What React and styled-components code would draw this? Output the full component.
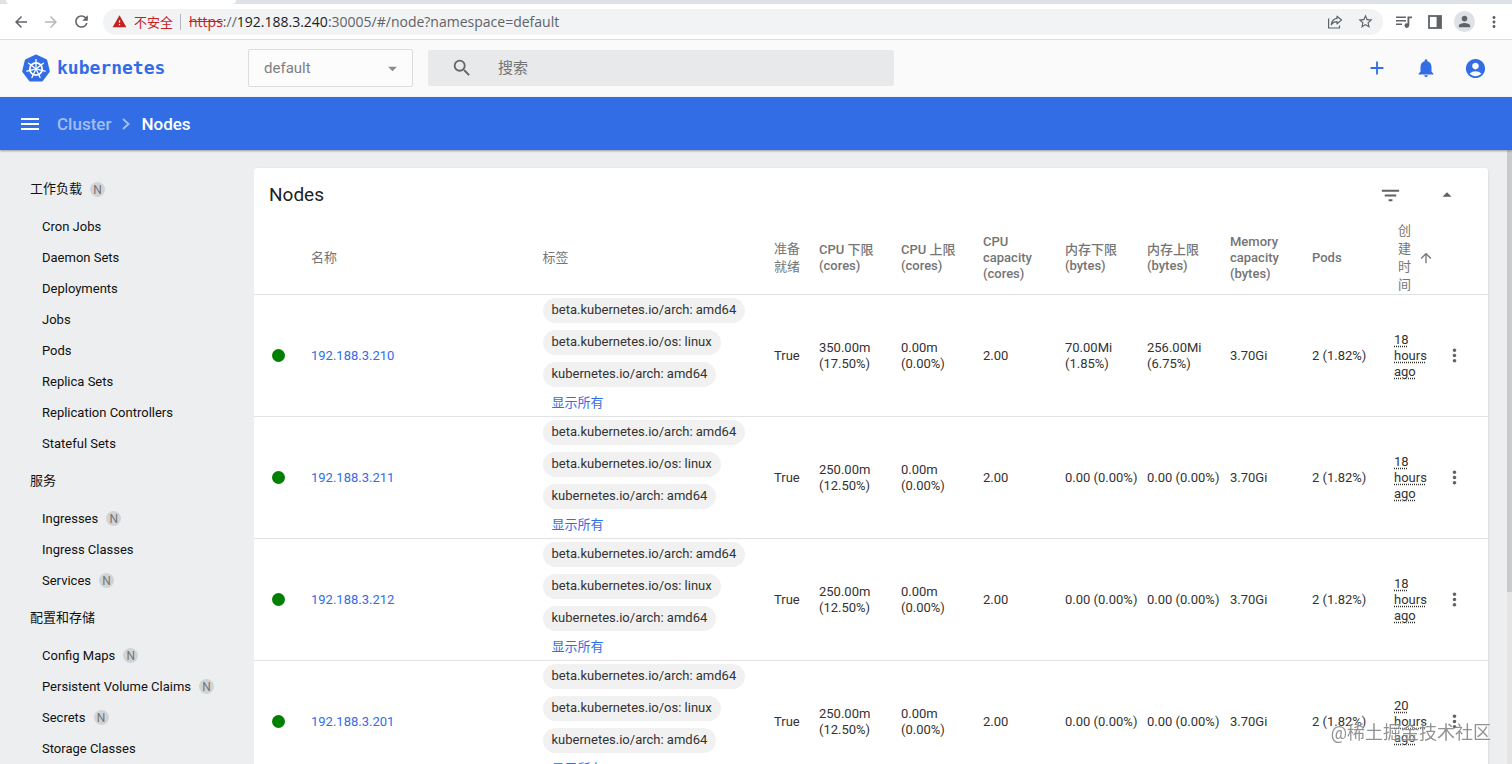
import { createGlobalStyle, styled } from 'styled-components';
import {
  MdAccountCircle,
  MdAdd,
  MdArrowBack,
  MdArrowDropDown,
  MdArrowDropUp,
  MdArrowForward,
  MdArrowUpward,
  MdFilterList,
  MdMenu,
  MdMoreVert,
  MdNotifications,
  MdPerson,
  MdRefresh,
  MdSearch,
  MdStarBorder,
  MdWarning,
} from 'react-icons/md';

const GlobalStyle = createGlobalStyle`
  * {
    box-sizing: border-box;
  }
  body {
    margin: 0;
    background: #eceeef;
    color: #212121;
    font-family: Roboto, 'Noto Sans CJK SC', sans-serif;
    font-size: 13px;
    line-height: 16px;
    overflow: hidden;
  }
  a {
    color: inherit;
    text-decoration: none;
  }
`;

const Page = styled.div`
  display: flex;
  flex-direction: column;
  height: 100vh;
`;

const IconButton = styled.button`
  display: flex;
  align-items: center;
  justify-content: center;
  flex: none;
  width: ${p => p.$size || 24}px;
  height: ${p => p.$size || 24}px;
  padding: 0;
  border: 0;
  border-radius: 50%;
  background: ${p => p.$background || 'transparent'};
  color: ${p => p.$color || '#5f6368'};
`;

/* browser bar */

const TabStrip = styled.div`
  display: flex;
  flex: none;
  height: 4px;
  background: #dee1e6;
`;

const ActiveTab = styled.div`
  width: 230px;
  margin-left: 6px;
  border-radius: 0 0 4px 4px;
  background: #fff;
`;

const BrowserBar = styled.div`
  display: flex;
  align-items: center;
  flex: none;
  gap: 7px;
  height: 36px;
  padding: 0 6px 0 9px;
  border-bottom: 1px solid #dcdfe1;
  background: #fff;
`;

const HistoryButtons = styled.div`
  display: flex;
  gap: 6px;
`;

const AddressBar = styled.div`
  display: flex;
  align-items: center;
  flex: 1;
  height: 26px;
  margin: 0 2px 0 3px;
  padding: 0 6px 0 9px;
  border-radius: 13px;
  background: #f1f3f4;
  color: #5f6368;
  font-family: 'Open Sans', 'Noto Sans CJK SC', sans-serif;
  font-size: 14px;
  gap: 6px;
`;

const NotSecure = styled.span`
  display: flex;
  align-items: center;
  gap: 7px;
  padding-right: 7px;
  border-right: 1px solid #b5b8bb;
  color: #c5221f;
  font-size: 13px;
`;

const Url = styled.span`
  flex: 1;
  padding-left: 2px;
  s {
    color: #c5221f;
  }
  b {
    color: #202124;
    font-weight: 400;
  }
`;

/* dashboard header */

const Header = styled.header`
  display: flex;
  align-items: center;
  flex: none;
  height: 57px;
  padding: 0 25px 1px 22px;
  background: #fafafa;
`;

const Brand = styled.a`
  display: flex;
  align-items: center;
  gap: 7px;
  width: 226px;
  color: #326de6;
  font-family: 'DejaVu Sans Mono', monospace;
  font-size: 18px;
  font-weight: 700;
  line-height: 18px;
`;

const SelectBox = styled.div`
  position: relative;
  width: 165px;
  height: 38px;
  color: #8a8a8a;
  svg {
    position: absolute;
    top: 9px;
    right: 10px;
    pointer-events: none;
  }
`;

const NamespaceSelect = styled.select`
  appearance: none;
  width: 100%;
  height: 100%;
  padding: 0 15px;
  border: 1px solid #dcdcdc;
  border-radius: 2px;
  background: #fcfcfc;
  color: #7f7f7f;
  font-family: inherit;
  font-size: 15px;
`;

const SearchBox = styled.label`
  display: flex;
  align-items: center;
  width: 466px;
  height: 36px;
  margin-left: 15px;
  padding-left: 23px;
  border-radius: 2px;
  background: #e7e9ea;
  color: #666;
`;

const SearchInput = styled.input`
  flex: 1;
  margin-left: 25px;
  padding: 0;
  border: 0;
  outline: 0;
  background: transparent;
  font-family: inherit;
  font-size: 15px;
  &::placeholder {
    color: #757575;
  }
`;

const HeaderActions = styled.div`
  display: flex;
  gap: 25px;
  margin-left: auto;
`;

const ActionBar = styled.div`
  display: flex;
  align-items: center;
  flex: none;
  z-index: 1;
  height: 53px;
  padding: 0 18px;
  background: #326de6;
  box-shadow: 0 1px 2px rgba(0, 0, 0, 0.35);
  color: #fff;
`;

const Breadcrumbs = styled.nav`
  display: flex;
  align-items: center;
  gap: 10px;
  margin-left: 15px;
  font-size: 17px;
  font-weight: 500;
  line-height: 20px;
  a, svg {
    color: #a0beef;
  }
`;

/* side navigation */

const Body = styled.div`
  display: flex;
  flex: 1;
  min-height: 0;
`;

const SideNav = styled.nav`
  flex: none;
  width: 254px;
  padding: 17px 0 0 30px;
  overflow: hidden;
  color: #111;
`;

const NavGroup = styled.a`
  display: flex;
  align-items: center;
  gap: 8px;
  height: 44px;
`;

const NavItem = styled.a`
  display: flex;
  align-items: center;
  gap: 8px;
  height: 31px;
  padding-left: 12px;
`;

const Badge = styled.span`
  width: 15px;
  height: 15px;
  border-radius: 50%;
  background: #d2d3d4;
  color: #757575;
  font-size: 12px;
  line-height: 16px;
  text-align: center;
`;

/* node list */

const Main = styled.main`
  flex: 1;
  padding: 18px 19px 0 0;
  overflow: hidden;
`;

const Card = styled.section`
  border-radius: 3px;
  background: #fff;
  box-shadow: 0 1px 3px rgba(0, 0, 0, 0.14);
`;

const CardHeader = styled.div`
  display: flex;
  align-items: center;
  gap: 33px;
  height: 54px;
  padding: 0 29px 0 15px;
`;

const CardTitle = styled.h2`
  flex: 1;
  margin: 0;
  font-size: 19px;
  font-weight: 400;
`;

const Table = styled.table`
  width: 100%;
  border-collapse: separate;
  border-spacing: 0;
  table-layout: fixed;
  color: #333;
  text-align: left;
`;

const Column = styled.col`
  width: ${p => (p.$width ? `${p.$width}px` : 'auto')};
`;

const HeadCell = styled.th`
  height: 73px;
  padding: 0 ${p => p.$gap || 0}px 0 0;
  border-bottom: 1px solid #e2e2e2;
  color: #757575;
  font-weight: ${p => (p.$cjk ? 400 : 500)};
  line-height: ${p => (p.$cjk ? 18 : 16)}px;
`;

const SortLabel = styled.span`
  display: flex;
  align-items: center;
  gap: 6px;
  padding-left: 4px;
  span {
    width: 14px;
  }
  svg {
    flex: none;
  }
`;

const Cell = styled.td`
  height: 122px;
  padding: 0 ${p => p.$gap || 0}px 0 0;
  border-bottom: 1px solid #e2e2e2;
`;

const StatusDot = styled.div`
  width: 13px;
  height: 13px;
  margin-left: 18px;
  border-radius: 50%;
  background: #008000;
`;

const NodeLink = styled.a`
  color: #326de6;
`;

const Labels = styled.div`
  display: flex;
  flex-direction: column;
  align-items: flex-start;
  gap: 7px;
  padding: 3px 0 5px;
`;

const Chip = styled.span`
  height: 25px;
  padding: 0 9px;
  border-radius: 13px;
  background: #f1f1f1;
  line-height: 24px;
  white-space: nowrap;
`;

const ShowAll = styled.button`
  height: 17px;
  padding: 0 9px;
  border: 0;
  background: transparent;
  color: #326de6;
  font: inherit;
`;

const Age = styled.span`
  text-decoration: underline dotted;
  text-underline-offset: 2px;
`;

const ScrollTrack = styled.div`
  flex: none;
  width: 5px;
  background: #e4e4e5;
`;

const ScrollThumb = styled.div`
  height: 72%;
  background: #c9cacc;
`;

const Watermark = styled.div`
  position: fixed;
  right: 21px;
  bottom: 19px;
  z-index: 2;
  color: rgba(110, 110, 110, 0.75);
  font-size: 18px;
  line-height: 24px;
  text-shadow: 0 0 2px #fff;
  pointer-events: none;
`;

const navigation = [
  {
    title: '工作负载',
    namespaced: true,
    items: [
      ['Cron Jobs'],
      ['Daemon Sets'],
      ['Deployments'],
      ['Jobs'],
      ['Pods'],
      ['Replica Sets'],
      ['Replication Controllers'],
      ['Stateful Sets'],
    ],
  },
  { title: '服务', items: [['Ingresses', true], ['Ingress Classes'], ['Services', true]] },
  {
    title: '配置和存储',
    items: [['Config Maps', true], ['Persistent Volume Claims', true], ['Secrets', true], ['Storage Classes']],
  },
];

const nodes = [
  { name: '192.188.3.210', cpu: '350.00m (17.50%)', memRequest: '70.00Mi (1.85%)', memLimit: '256.00Mi (6.75%)', age: '18 hours ago' },
  { name: '192.188.3.211', cpu: '250.00m (12.50%)', memRequest: '0.00 (0.00%)', memLimit: '0.00 (0.00%)', age: '18 hours ago' },
  { name: '192.188.3.212', cpu: '250.00m (12.50%)', memRequest: '0.00 (0.00%)', memLimit: '0.00 (0.00%)', age: '18 hours ago' },
  { name: '192.188.3.201', cpu: '250.00m (12.50%)', memRequest: '0.00 (0.00%)', memLimit: '0.00 (0.00%)', age: '20 hours ago' },
];

const labels = ['beta.kubernetes.io/arch: amd64', 'beta.kubernetes.io/os: linux', 'kubernetes.io/arch: amd64'];

const columnWidths = [57, 0, 0, 45, 82, 82, 82, 82, 83, 82, 82, 48, 46];

const spokes = [0, 1, 2, 3, 4, 5, 6].map(i => (i * 360) / 7);

const KubernetesLogo = () => (
  <svg width="28" height="29" viewBox="0 0 28 29" aria-hidden="true">
    <path
      d="M14 2.4 L23.5 6.9 L26 17.2 L19.4 25.8 L8.6 25.8 L2 17.2 L4.5 6.9 Z"
      fill="#326de6"
      stroke="#326de6"
      strokeWidth="3.6"
      strokeLinejoin="round"
    />
    <g fill="none" stroke="#fff" strokeLinecap="round">
      <circle cx="14" cy="15" r="6.2" strokeWidth="1.8" />
      {spokes.map(angle => (
        <path key={angle} d="M14 13 L14 5.6" strokeWidth="1.3" transform={`rotate(${angle} 14 15)`} />
      ))}
    </g>
    <circle cx="14" cy="15" r="1.7" fill="#fff" />
  </svg>
);

const ShareIcon = () => (
  <svg width="16" height="16" viewBox="0 0 16 16" fill="none" stroke="#5f6368" strokeWidth="1.2" aria-hidden="true">
    <path d="M1.6 4.5 V14 H12.5 V11.5" />
    <path d="M10 2.2 L14.5 6 L10 9.8 V7.6 C7.4 7.6 5.6 8.6 4.3 10.8 C4.7 7.2 6.6 4.8 10 4.4 Z" strokeLinejoin="round" />
  </svg>
);

const PlaylistIcon = () => (
  <svg width="18" height="18" viewBox="0 0 18 18" fill="none" stroke="#5f6368" strokeWidth="1.6" aria-hidden="true">
    <path d="M1 4.3 H11 M1 7.8 H11 M1 11.3 H7" />
    <path d="M13.4 12.5 V4.3 H17" strokeWidth="1.8" />
    <circle cx="11.8" cy="12.6" r="2.3" fill="#5f6368" stroke="none" />
  </svg>
);

const SidePanelIcon = () => (
  <svg width="14" height="14" viewBox="0 0 14 14" aria-hidden="true">
    <rect x="1" y="1" width="12" height="12" fill="none" stroke="#5f6368" strokeWidth="1.8" />
    <rect x="8.6" y="1" width="4.4" height="12" fill="#5f6368" />
  </svg>
);

const BrowserChrome = () => (
  <>
    <TabStrip>
      <ActiveTab />
    </TabStrip>
    <BrowserBar>
      <HistoryButtons>
        <IconButton aria-label="Back"><MdArrowBack size={18} /></IconButton>
        <IconButton aria-label="Forward" $color="#b6b8ba"><MdArrowForward size={18} /></IconButton>
        <IconButton aria-label="Reload"><MdRefresh size={19} /></IconButton>
      </HistoryButtons>
      <AddressBar>
        <NotSecure>
          <MdWarning size={15} />
          不安全
        </NotSecure>
        <Url>
          <s>https</s>://<b>192.188.3.240</b>:30005/#/node?namespace=default
        </Url>
        <IconButton aria-label="Share"><ShareIcon /></IconButton>
        <IconButton aria-label="Bookmark"><MdStarBorder size={17} /></IconButton>
      </AddressBar>
      <IconButton aria-label="Media"><PlaylistIcon /></IconButton>
      <IconButton aria-label="Side panel"><SidePanelIcon /></IconButton>
      <IconButton aria-label="Profile" $size={21} $background="#dee1e6"><MdPerson size={17} /></IconButton>
      <IconButton aria-label="Browser menu"><MdMoreVert size={18} /></IconButton>
    </BrowserBar>
  </>
);

const DashboardHeader = () => (
  <>
    <Header>
      <Brand href="#/">
        <KubernetesLogo />
        kubernetes
      </Brand>
      <SelectBox>
        <NamespaceSelect aria-label="Namespace">
          <option>default</option>
        </NamespaceSelect>
        <MdArrowDropDown size={21} />
      </SelectBox>
      <SearchBox>
        <MdSearch size={22} />
        <SearchInput type="text" placeholder="搜索" aria-label="搜索" />
      </SearchBox>
      <HeaderActions>
        <IconButton aria-label="Create" $color="#326de6"><MdAdd size={22} /></IconButton>
        <IconButton aria-label="Notifications" $color="#326de6"><MdNotifications size={22} /></IconButton>
        <IconButton aria-label="Account" $color="#326de6"><MdAccountCircle size={23} /></IconButton>
      </HeaderActions>
    </Header>
    <ActionBar>
      <IconButton aria-label="Menu" $color="#fff"><MdMenu size={24} /></IconButton>
      <Breadcrumbs aria-label="Breadcrumb">
        <a href="#/cluster">Cluster</a>
        <svg width="10" height="14" viewBox="0 0 10 14" fill="none" stroke="currentColor" strokeWidth="2" aria-hidden="true">
          <path d="M2 2 L7.5 7 L2 12" />
        </svg>
        <span>Nodes</span>
      </Breadcrumbs>
    </ActionBar>
  </>
);

const Sidebar = () => (
  <SideNav>
    {navigation.map(group => (
      <div key={group.title}>
        <NavGroup href="#/">
          {group.title}
          {group.namespaced && <Badge>N</Badge>}
        </NavGroup>
        {group.items.map(([title, namespaced]) => (
          <NavItem key={title} href="#/">
            {title}
            {namespaced && <Badge>N</Badge>}
          </NavItem>
        ))}
      </div>
    ))}
  </SideNav>
);

const NodeRow = ({ name, cpu, memRequest, memLimit, age }) => (
  <tr>
    <Cell><StatusDot /></Cell>
    <Cell><NodeLink href="#/node">{name}</NodeLink></Cell>
    <Cell>
      <Labels>
        {labels.map(label => <Chip key={label}>{label}</Chip>)}
        <ShowAll>显示所有</ShowAll>
      </Labels>
    </Cell>
    <Cell>True</Cell>
    <Cell $gap={24}>{cpu}</Cell>
    <Cell $gap={24}>0.00m (0.00%)</Cell>
    <Cell>2.00</Cell>
    <Cell>{memRequest}</Cell>
    <Cell>{memLimit}</Cell>
    <Cell>3.70Gi</Cell>
    <Cell>2 (1.82%)</Cell>
    <Cell $gap={12}><Age>{age}</Age></Cell>
    <Cell><IconButton aria-label="Actions" $color="#616161"><MdMoreVert size={21} /></IconButton></Cell>
  </tr>
);

const NodeList = () => (
  <Card>
    <CardHeader>
      <CardTitle>Nodes</CardTitle>
      <IconButton aria-label="Filter" $color="#616161"><MdFilterList size={23} /></IconButton>
      <IconButton aria-label="Collapse" $color="#616161"><MdArrowDropUp size={22} /></IconButton>
    </CardHeader>
    <Table>
      <colgroup>
        {columnWidths.map((width, i) => <Column key={i} $width={width} />)}
      </colgroup>
      <thead>
        <tr>
          <HeadCell />
          <HeadCell $cjk>名称</HeadCell>
          <HeadCell $cjk>标签</HeadCell>
          <HeadCell $cjk $gap={12}>准备就绪</HeadCell>
          <HeadCell $gap={20}>CPU 下限 (cores)</HeadCell>
          <HeadCell $gap={20}>CPU 上限 (cores)</HeadCell>
          <HeadCell $gap={20}>CPU capacity (cores)</HeadCell>
          <HeadCell $gap={20}>内存下限 (bytes)</HeadCell>
          <HeadCell $gap={20}>内存上限 (bytes)</HeadCell>
          <HeadCell $gap={20}>Memory capacity (bytes)</HeadCell>
          <HeadCell>Pods</HeadCell>
          <HeadCell $cjk>
            <SortLabel>
              <span>创建时间</span>
              <MdArrowUpward size={16} />
            </SortLabel>
          </HeadCell>
          <HeadCell />
        </tr>
      </thead>
      <tbody>
        {nodes.map(node => <NodeRow key={node.name} {...node} />)}
      </tbody>
    </Table>
  </Card>
);

const App = () => (
  <Page>
    <GlobalStyle />
    <BrowserChrome />
    <DashboardHeader />
    <Body>
      <Sidebar />
      <Main>
        <NodeList />
      </Main>
      <ScrollTrack>
        <ScrollThumb />
      </ScrollTrack>
    </Body>
    <Watermark>@稀土掘金技术社区</Watermark>
  </Page>
);

export default App;
